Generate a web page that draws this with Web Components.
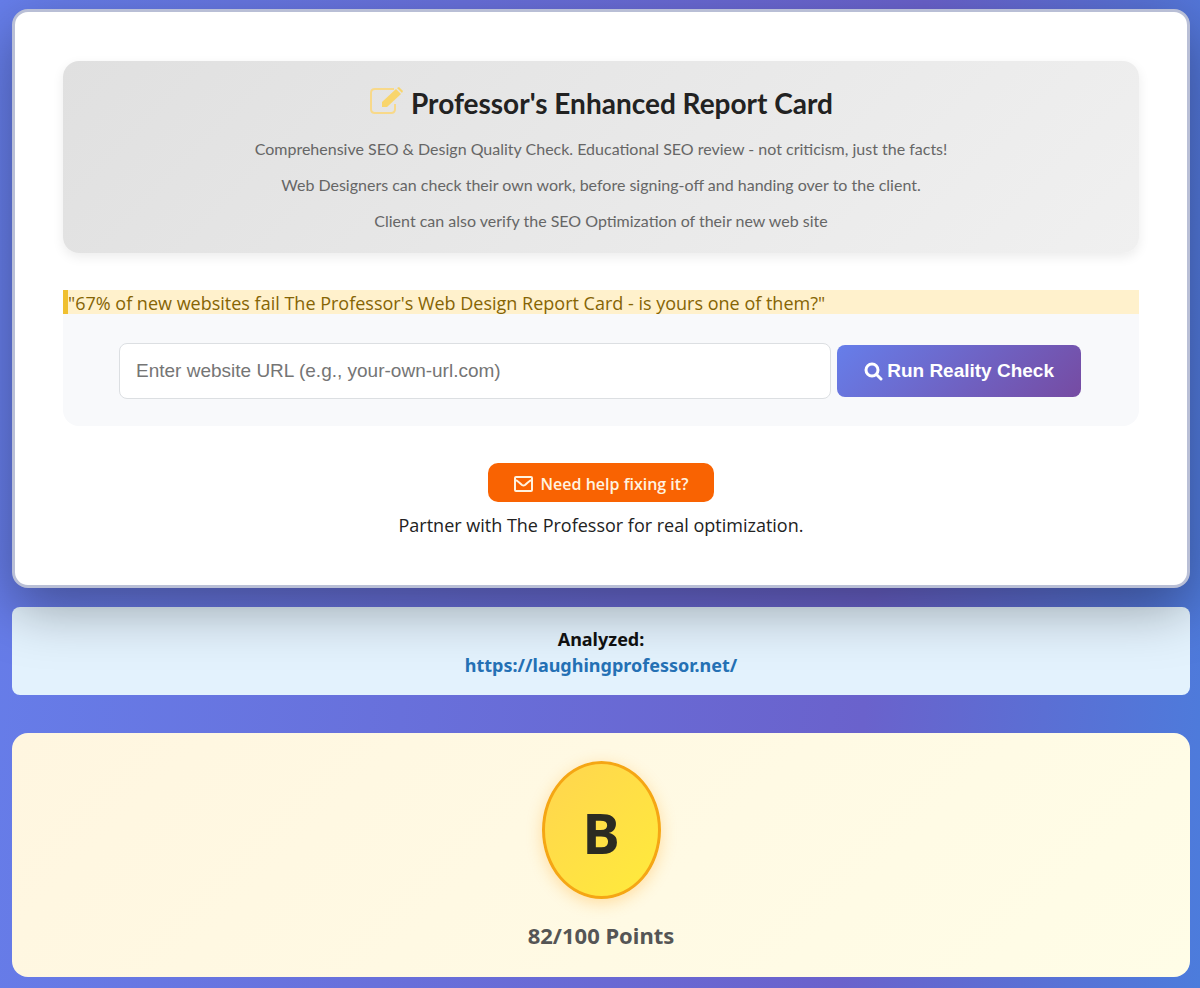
<!DOCTYPE html>
<html lang="en">
<head>
<meta charset="utf-8">
<meta name="viewport" content="width=device-width, initial-scale=1">
<title>Professor's Enhanced Report Card</title>
<style>
    * {
        box-sizing: border-box;
    }

    body {
        margin: 0;
        min-height: 100vh;
        padding: 9px 10px 11px 12px;
        background: linear-gradient(95deg, #667eea 0%, #6a62cc 72%, #4c7cdc 100%);
        font-family: "Noto Sans", "Open Sans", sans-serif;
        font-size: 18px;
        line-height: 24px;
        color: #222;
    }
</style>
</head>
<body>

<report-page>
    <report-card>
        <report-header heading="Professor's Enhanced Report Card">
            <p>Comprehensive SEO &amp; Design Quality Check. Educational SEO review - not criticism, just the facts!</p>
            <p>Web Designers can check their own work, before signing-off and handing over to the client.</p>
            <p>Client can also verify the SEO Optimization of their new web site</p>
        </report-header>
        <quote-bar>"67% of new websites fail The Professor's Web Design Report Card - is yours one of them?"</quote-bar>
        <url-form></url-form>
        <help-block>Partner with The Professor for real optimization.</help-block>
    </report-card>
    <analyzed-site url="https://laughingprofessor.net/"></analyzed-site>
    <grade-card grade="B">82/100 Points</grade-card>
</report-page>

<script>
    class ReportPage extends HTMLElement {
        constructor() {
            super()
            this.attachShadow({ mode: "open" })
            this.shadowRoot.innerHTML = `
            <style>
                :host {
                    display: flex;
                    flex-direction: column;
                }
            </style>
            <slot></slot>
            `
        }
    }

    class ReportCard extends HTMLElement {
        constructor() {
            super()
            this.attachShadow({ mode: "open" })
            this.shadowRoot.innerHTML = `
            <style>
                /* positioned so that its shadow falls over the card below */
                :host {
                    display: block;
                    position: relative;
                    padding: 49px 48px 48px;
                    border: 3px solid #b9bfd6;
                    border-radius: 16px;
                    background: #fff;
                    box-shadow: 0 20px 56px rgba(0, 0, 0, 0.35);
                }
            </style>
            <slot></slot>
            `
        }
    }

    class ReportHeader extends HTMLElement {
        constructor() {
            super()
            this.attachShadow({ mode: "open" })
        }

        connectedCallback() {
            this.shadowRoot.innerHTML = `
            <style>
                :host {
                    display: block;
                    padding: 20px 24px 14px;
                    border-radius: 16px;
                    background: linear-gradient(135deg, #e0e0e0, #f0f0f0);
                    box-shadow: 0 4px 12px rgba(0, 0, 0, 0.08);
                    font-family: Lato, "Open Sans", sans-serif;
                    text-align: center;
                }

                h1 {
                    display: flex;
                    justify-content: center;
                    align-items: center;
                    gap: 8px;
                    margin: 0 0 6px;
                    font-size: 28px;
                    line-height: 44px;
                    color: #222;
                }

                svg {
                    width: 34px;
                    height: 30px;
                    margin-bottom: 4px;
                }

                ::slotted(p) {
                    margin: 0;
                    font-size: 16px;
                    line-height: 36px;
                    color: #666;
                }
            </style>
            <h1>
                <svg viewBox="0 0 34 30" fill="none" stroke="#f8d98a" stroke-width="2" aria-hidden="true">
                    <path d="M25 3H6Q2 3 2 7V23Q2 27 6 27H22Q26 27 26 23V18"/>
                    <path d="M13 16 27 3 32 8 18 21H13Z" fill="#f8d56c" stroke="none"/>
                    <path d="M28 2 30 1 34 5 33 7Z" fill="#f8d56c" stroke="none"/>
                </svg>
                <span>${this.getAttribute("heading")}</span>
            </h1>
            <slot></slot>
            `
        }
    }

    class QuoteBar extends HTMLElement {
        constructor() {
            super()
            this.attachShadow({ mode: "open" })
            this.shadowRoot.innerHTML = `
            <style>
                :host {
                    display: block;
                    margin-top: 37px;
                    padding-top: 2px;
                    border-left: 5px solid #f0c030;
                    background: #fff1cc;
                    font-family: "Open Sans", sans-serif;
                    line-height: 22px;
                    color: #856404;
                }
            </style>
            <slot></slot>
            `
        }
    }

    class UrlForm extends HTMLElement {
        constructor() {
            super()
            this.attachShadow({ mode: "open" })
            this.shadowRoot.innerHTML = `
            <style>
                :host {
                    display: block;
                    padding: 29px 58px 27px 56px;
                    border-radius: 0 0 16px 16px;
                    background: #f8f9fb;
                }

                form {
                    display: flex;
                    align-items: center;
                    gap: 6px;
                }

                input,
                button {
                    box-sizing: border-box;
                    border-radius: 8px;
                    font-family: "Liberation Sans", Arial, sans-serif;
                    font-size: 19px;
                }

                input {
                    flex: 1;
                    min-width: 0;
                    height: 56px;
                    padding: 0 16px;
                    border: 1px solid #dcdfe2;
                    background: #fff;
                    color: #333;
                }

                input::placeholder {
                    color: #757575;
                }

                button {
                    display: flex;
                    align-items: center;
                    gap: 4px;
                    height: 52px;
                    padding: 0 27px;
                    border: 0;
                    background: linear-gradient(135deg, #667eea, #764ba2);
                    color: #fff;
                    font-weight: bold;
                    cursor: pointer;
                }

                svg {
                    width: 19px;
                    height: 19px;
                }
            </style>
            <form>
                <input type="text" aria-label="Website URL" placeholder="Enter website URL (e.g., your-own-url.com)">
                <button type="button">
                    <svg viewBox="0 0 19 19" fill="none" stroke="#fff" stroke-width="3" stroke-linecap="round" aria-hidden="true">
                        <circle cx="8" cy="8" r="6"/>
                        <path d="M13 13 17 17"/>
                    </svg>
                    Run Reality Check
                </button>
            </form>
            `
        }
    }

    class HelpBlock extends HTMLElement {
        constructor() {
            super()
            this.attachShadow({ mode: "open" })
            this.shadowRoot.innerHTML = `
            <style>
                :host {
                    display: flex;
                    flex-direction: column;
                    align-items: center;
                    gap: 11px;
                    margin-top: 37px;
                    font-family: "Open Sans", sans-serif;
                    text-align: center;
                }

                a {
                    display: flex;
                    align-items: center;
                    gap: 8px;
                    padding: 9px 26px 6px;
                    border-radius: 10px;
                    background: #f96302;
                    color: #fff3e0;
                    font-size: 16px;
                    font-weight: 600;
                    text-decoration: none;
                }

                svg {
                    width: 19px;
                    height: 16px;
                }
            </style>
            <a href="#help">
                <svg viewBox="0 0 19 16" fill="none" stroke="#fff3e0" stroke-width="2" stroke-linejoin="round" aria-hidden="true">
                    <rect x="1" y="1" width="17" height="14" rx="1"/>
                    <path d="M2 4Q6 7 8 9 9.500 10 11 9 13 7 17 4"/>
                </svg>
                <span>Need help fixing it?</span>
            </a>
            <span><slot></slot></span>
            `
        }
    }

    class AnalyzedSite extends HTMLElement {
        constructor() {
            super()
            this.attachShadow({ mode: "open" })
        }

        connectedCallback() {
            const url = this.getAttribute("url")

            this.shadowRoot.innerHTML = `
            <style>
                :host {
                    display: flex;
                    flex-direction: column;
                    align-items: center;
                    margin-top: 19px;
                    padding: 19px 16px 17px;
                    border-radius: 8px;
                    background: #e3f2fd;
                    line-height: 26px;
                    font-weight: bold;
                    color: #111;
                }

                a {
                    color: #2571b5;
                    text-decoration: none;
                }
            </style>
            <span>Analyzed:</span>
            <a href="${url}">${url}</a>
            `
        }
    }

    class GradeCard extends HTMLElement {
        constructor() {
            super()
            this.attachShadow({ mode: "open" })
        }

        connectedCallback() {
            this.shadowRoot.innerHTML = `
            <style>
                :host {
                    display: flex;
                    flex-direction: column;
                    align-items: center;
                    gap: 21px;
                    margin-top: 38px;
                    padding: 28px 16px 27px;
                    border-radius: 16px;
                    background: linear-gradient(135deg, #fff6e0, #fffde7);
                    font-size: 22px;
                    line-height: 30px;
                    font-weight: bold;
                    color: #555;
                }

                .grade {
                    display: flex;
                    justify-content: center;
                    align-items: center;
                    box-sizing: border-box;
                    width: 119px;
                    height: 138px;
                    padding-top: 4px;
                    border: 3px solid #f5a614;
                    border-radius: 50%;
                    background: linear-gradient(135deg, #ffd54f, #ffeb3b);
                    box-shadow: 0 4px 16px rgba(255, 160, 0, 0.3);
                    font-size: 56px;
                    color: #2b2b22;
                }
            </style>
            <div class="grade">${this.getAttribute("grade")}</div>
            <span><slot></slot></span>
            `
        }
    }

    customElements.define('report-page', ReportPage)
    customElements.define('report-card', ReportCard)
    customElements.define('report-header', ReportHeader)
    customElements.define('quote-bar', QuoteBar)
    customElements.define('url-form', UrlForm)
    customElements.define('help-block', HelpBlock)
    customElements.define('analyzed-site', AnalyzedSite)
    customElements.define('grade-card', GradeCard)
</script>
</body>
</html>
